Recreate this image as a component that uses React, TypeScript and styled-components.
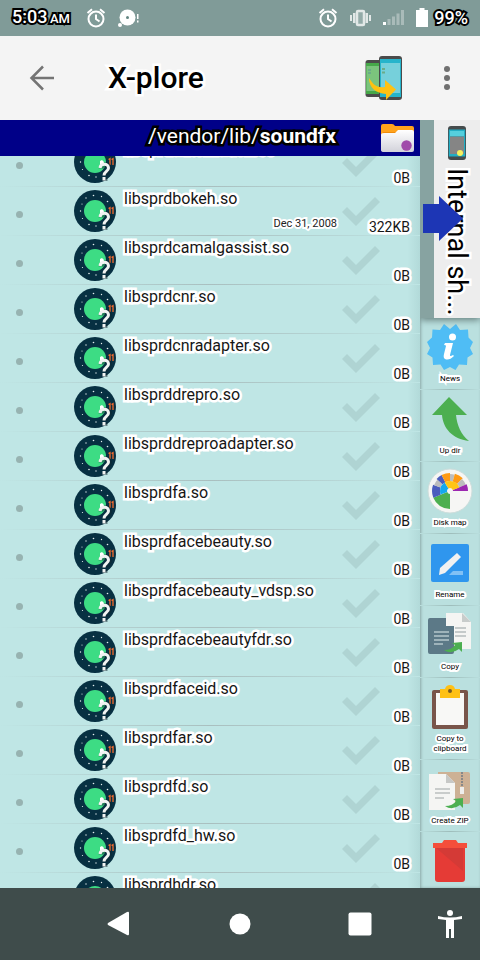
import React from "react";
import styled, { createGlobalStyle, css } from "styled-components";

const GlobalStyle = createGlobalStyle`
  * { box-sizing: border-box; }
  body { margin: 0; font-family: Roboto, "Liberation Sans", sans-serif; color: #000; }
  button { font: inherit; color: inherit; background: none; border: 0; padding: 0; margin: 0; cursor: pointer; }
  svg { display: block; flex: none; }
`;

const outline = (color: string, width: number) => css`
  -webkit-text-stroke: ${width}px ${color};
  paint-order: stroke fill;
  stroke-linejoin: round;
`;

const Screen = styled.div`
  display: flex;
  flex-direction: column;
  height: 100vh;
  overflow: hidden;
  background: #bfe6e5;
`;

const StatusBar = styled.div`
  display: flex;
  align-items: center;
  flex: none;
  height: 36px;
  padding: 0 12px;
  background: #809b98;
`;

const StatusText = styled.span`
  ${outline("#000", 4)}
  color: #fff;
  font-size: 18px;
  font-weight: 500;
  line-height: 36px;
  white-space: nowrap;
  small { margin-left: -2px; font-size: 13px; }
`;

const StatusIcons = styled.div<{ $end?: boolean }>`
  display: flex;
  align-items: center;
  gap: 12px;
  margin-left: ${(p) => (p.$end ? "auto" : "16px")};
  margin-right: ${(p) => (p.$end ? "6px" : "0")};
`;

const Toolbar = styled.header`
  display: flex;
  align-items: center;
  flex: none;
  height: 84px;
  padding: 0 18px 0 28px;
  background: #f4f4f4;
`;

const Title = styled.h1`
  ${outline("#fff", 5)}
  flex: 1;
  margin: 0 0 0 52px;
  font-size: 30px;
  font-weight: 500;
  line-height: 40px;
`;

const MenuButton = styled.button`
  margin-left: 29px;
`;

const Main = styled.main`
  display: flex;
  flex: 1;
  min-height: 0;
`;

const Pane = styled.section`
  display: flex;
  flex-direction: column;
  flex: 1;
  min-width: 0;
`;

const PathBar = styled.div`
  display: flex;
  align-items: center;
  flex: none;
  height: 36px;
  padding: 0 4px 0 8px;
  background: #000088;
`;

const Path = styled.h2`
  ${outline("#000", 5)}
  flex: 1;
  margin: 0;
  padding: 0 44px 4px 0;
  color: #fff;
  font-size: 21px;
  font-weight: 400;
  line-height: 28px;
  text-align: right;
`;

const FileList = styled.ul`
  display: flex;
  flex-direction: column;
  flex: 1;
  min-height: 0;
  margin: 0;
  padding: 0;
  overflow: hidden;
  list-style: none;
  background: linear-gradient(90deg, transparent 97%, #b2dad9) #bfe6e5;
`;

const FileRow = styled.li`
  display: flex;
  flex: none;
  height: 49px;
  padding: 0 10px 0 16px;
  border-bottom: 1px solid;
  border-image: linear-gradient(90deg, #bfe6e5, #a9bfbf 50%, #bfe6e5) 1;
  &:first-child { margin-top: -18px; }
`;

const Dot = styled.span`
  flex: none;
  width: 7px;
  height: 7px;
  margin: 24px 51px 0 0;
  border-radius: 50%;
  background: #97b3b1;
`;

const FileName = styled.span`
  ${outline("#fff", 5)}
  flex: 1;
  margin-left: 8px;
  color: #161616;
  font-size: 16px;
  line-height: 24px;
  white-space: nowrap;
`;

const FileDate = styled.span`
  ${outline("#fff", 4)}
  align-self: flex-end;
  margin: 0 4px 3px 0;
  color: #222;
  font-size: 11px;
  line-height: 16px;
`;

const Meta = styled.div`
  display: flex;
  flex-direction: column;
  flex: none;
  width: 69px;
  padding-top: 9px;
`;

const FileSize = styled.span`
  ${outline("#fff", 5)}
  margin-top: -8px;
  color: #161616;
  font-size: 14px;
  line-height: 16px;
  text-align: right;
`;

const Side = styled.aside`
  display: flex;
  flex-direction: column;
  flex: none;
  width: 60px;
  overflow: hidden;
  background: #bae0df;
  box-shadow: inset 1px 0 3px #8aa8a6;
`;

const StorageTab = styled.button`
  position: relative;
  display: flex;
  flex-direction: column;
  align-items: center;
  flex: none;
  height: 198px;
  padding-top: 6px;
  border-left: 14px solid #87a3a1;
  background: #ededed;
  box-shadow: 0 2px 7px #657d7b;
`;

const TabLabel = styled.span`
  ${outline("#fff", 5)}
  margin-top: 8px;
  font-size: 27px;
  line-height: 32px;
  writing-mode: vertical-rl;
  white-space: nowrap;
`;

const PaneArrow = styled.svg`
  position: absolute;
  left: -11px;
  top: 76px;
`;

const Action = styled.button`
  display: flex;
  flex-direction: column;
  align-items: center;
  flex: none;
  gap: 4px;
  min-height: 72px;
  padding: 6px 0 5px;
  border-bottom: 1px solid;
  border-image: linear-gradient(90deg, #bae0df, #9ebdbb 50%, #bae0df) 1;
`;

const ActionLabel = styled.span`
  ${outline("#fff", 4)}
  width: 52px;
  font-size: 8px;
  line-height: 10px;
  text-align: center;
`;

const NavBar = styled.nav`
  display: grid;
  grid-template-columns: 1fr 2fr 2fr 2fr 1fr;
  align-items: center;
  flex: none;
  height: 72px;
  background: #3f4c4b;
`;

const NavButton = styled.button<{ $column: number }>`
  grid-column: ${(p) => p.$column};
  display: flex;
  justify-content: center;
`;

const AlarmIcon = () => (
  <svg width="20" height="20" viewBox="0 0 20 20" fill="none" stroke="#fff" strokeWidth="2">
    <circle cx="10" cy="11" r="7.500" />
    <path d="M1.500 5 6 1.300M18.500 5 14 1.300M10 6.500V11l3.500 2.500" />
  </svg>
);

const ChatIcon = () => (
  <svg width="21" height="20" viewBox="0 0 21 20" fill="#fff">
    <circle cx="9.500" cy="9.500" r="8" />
    <circle cx="2" cy="17" r="2" />
    <circle cx="9.500" cy="9.500" r="1.500" fill="#638682" />
    <path d="M19 6h1.500v5H19zM19 12.500h1.500v2H19z" />
  </svg>
);

const VibrateIcon = () => (
  <svg width="21" height="18" viewBox="0 0 21 18" fill="#e2e8e7">
    <path d="M0 6h2v6H0zM3 4h2.500v10H3zM15.500 4H18v10h-2.500zM19 6h2v6h-2z" />
    <rect x="7" y="2" width="7" height="14" rx="1" fill="#93aba8" stroke="#e2e8e7" strokeWidth="2.500" />
  </svg>
);

const SignalIcon = () => (
  <svg width="21" height="16" viewBox="0 0 21 16" fill="#a9bbb9">
    <path d="M0 12h3v3H0z" fill="#fff" />
    <path d="M4.500 9h3v6h-3zM9 6.500h3V15H9zM13.500 3.500h3V15h-3zM18 0h3v15h-3z" />
  </svg>
);

const BatteryIcon = () => (
  <svg width="12" height="20" viewBox="0 0 12 20">
    <path d="M3.500 0h5v2H12v17H0V2h3.500z" fill="#fff" />
  </svg>
);

const BackIcon = () => (
  <svg width="28" height="28" viewBox="0 0 28 28" fill="none" stroke="#747474" strokeWidth="2.500">
    <path d="M26 14H4M15 2.500 3.500 14 15 25.500" />
  </svg>
);

const PhonesIcon = () => (
  <svg width="38" height="44" viewBox="0 0 38 44">
    <rect x=".5" y="4" width="18" height="37" rx="2.500" fill="#4b4b4b" />
    <path d="M1 7h15v31H1z" fill="#46a849" />
    <path d="M1.500 10H16v25H1.500z" fill="#7bc47d" />
    <rect x="14" y="0" width="23" height="44" rx="3" fill="#4b4b4b" />
    <path d="M15 3h21v38H15z" fill="#26b4cb" />
    <path d="M16 7h19v30H16z" fill="#76d0db" />
    <path d="M3 13h3v2H3zM3 16h3v2H3zM17 12h3v2h-3zM17 15.500h3v2h-3z" fill="#6bac89" />
    <path d="M4 22c5 8 9 10 16 9v-7l11 9.500L21 44v-6C11 37 4 32 4 22z" fill="#ffc112" />
  </svg>
);

const FolderIcon = () => (
  <svg width="36" height="30" viewBox="0 0 36 30">
    <defs>
      <linearGradient id="folder" x2="0" y2="1"><stop stopColor="#fff" /><stop offset="1" stopColor="#d2d2da" /></linearGradient>
    </defs>
    <path d="M1 22V3q0-2 2-2h9q2 0 3 2h17q2 0 2 2v18z" fill="#ffa21c" />
    <path d="M3 9h29v9H3z" fill="#ef8b0b" />
    <path d="M1 12q0-2 3-2h11l3-3h14q2 0 2 2v18q0 2-2 2H4q-3 0-3-2z" fill="url(#folder)" />
    <circle cx="26.500" cy="22.500" r="5.200" fill="#a04baa" />
  </svg>
);

const FileIcon = () => (
  <svg width="42" height="48" viewBox="0 0 42 48">
    <circle cx="21" cy="24" r="21" fill="#073042" />
    <g fill="#e4eeee">
      <circle cx="19.500" cy="8.500" r=".8" /><circle cx="27.500" cy="9.500" r=".7" /><circle cx="12" cy="11" r=".7" />
      <circle cx="33.500" cy="14.500" r=".8" /><circle cx="8" cy="17" r=".6" /><circle cx="6.500" cy="24" r=".7" />
      <circle cx="8.500" cy="31.500" r=".6" /><circle cx="15" cy="37.500" r=".8" /><circle cx="22" cy="39" r=".7" />
    </g>
    <circle cx="21" cy="24" r="11" fill="#3ddc84" />
    <path d="m34.500 21.500 1.500-.8v6.300M37.500 21.500l1.500-.8v6.300" fill="none" stroke="#f26b2f" strokeWidth="1.300" />
    <path d="M27 30.500c.5-5 8.500-5 8.500 0 0 3.500-4.500 3.500-4.500 7.500M31 39.500v3.500" fill="none" stroke="#10262e" strokeWidth="5" opacity=".5" />
    <path d="m26 23 2-1 2 2-1 3-3-1z" fill="#fff" />
    <path d="M26 30c.5-5 8.500-5 8.500 0 0 3.500-4.500 3.500-4.500 7.500M30 39v3.500" fill="none" stroke="#f1f3f2" strokeWidth="3" />
  </svg>
);

const CheckIcon = () => (
  <svg width="40" height="31" viewBox="0 0 40 31">
    <path d="m1 16 5-5 9 9L34 1l5 5-24 24z" fill="#afd4d3" />
  </svg>
);

const PhoneIcon = () => (
  <svg width="18" height="34" viewBox="0 0 18 34">
    <rect width="18" height="34" rx="3" fill="#454b4c" />
    <path d="M.8 3.500h16.400v27H.8z" fill="#22aec4" />
    <path d="M2 5h14v5H2z" fill="#55cfdd" />
    <path d="M2 10.500h14V28H2z" fill="#858585" />
    <circle cx="12" cy="27" r="3" fill="#f6f15c" />
  </svg>
);

const NewsIcon = () => (
  <svg width="46" height="46" viewBox="0 0 46 46">
    <path d="M23 5 29 0l4 6 8-.5.5 8L46 18l-3 6 3 6-5.500 3.500L40 41l-8-.5-3.500 5.500L23 43l-6 3-3.500-5.500L6 41l-.5-7.500L0 30l3-6-3-6 5-4.500.5-8L13 6l4-6z" fill="#4fbdf5" />
    <circle cx="25.500" cy="13" r="3.500" fill="#fff" />
    <path d="M18 19h8l-3 12q-.3 2 3 0l1 1q-5 5-9 3-2-1-1-5l2-8q0-1-2-1z" fill="#fff" />
  </svg>
);

const UpIcon = () => (
  <svg width="38" height="46" viewBox="0 0 38 46">
    <path d="M18 1 36 19H25c1 10 5 20 13 26C21 43 12 32 11 19H1z" fill="#4caf50" />
  </svg>
);

const diskSegments: { from: number; to: number; inner: number; outer: number; color: string }[] = [
  { from: 90, to: 158, inner: 3, outer: 18, color: "#4caf50" },
  { from: 158, to: 200, inner: 10, outer: 18, color: "#4b5cbd" },
  { from: 200, to: 222, inner: 10, outer: 17, color: "#bdbdbd" },
  { from: 222, to: 242, inner: 10, outer: 18, color: "#4b5cbd" },
  { from: 242, to: 270, inner: 10, outer: 18, color: "#ff9b14" },
  { from: 270, to: 286, inner: 10, outer: 17, color: "#bdbdbd" },
  { from: 286, to: 315, inner: 10, outer: 18, color: "#ff9b14" },
  { from: 315, to: 338, inner: 10, outer: 17, color: "#bdbdbd" },
  { from: 338, to: 360, inner: 3, outer: 18, color: "#9c27b0" },
  { from: 158, to: 238, inner: 3, outer: 10, color: "#14a8ee" },
  { from: 238, to: 338, inner: 3, outer: 10, color: "#ffc515" },
];

const DiskIcon = () => (
  <svg width="46" height="46" viewBox="0 0 46 46" fill="none">
    <circle cx="23" cy="23" r="22" fill="#f6f6f4" stroke="#cddddb" />
    {diskSegments.map((s) => (
      <circle
        key={`${s.from}-${s.inner}`}
        cx="23"
        cy="23"
        r={(s.inner + s.outer) / 2}
        stroke={s.color}
        strokeWidth={s.outer - s.inner}
        pathLength={360}
        strokeDasharray={`0 ${s.from} ${s.to - s.from} 360`}
      />
    ))}
  </svg>
);

const RenameIcon = () => (
  <svg width="38" height="46" viewBox="0 0 38 46">
    <rect y="4" width="38" height="38" rx="2" fill="#2f96ee" />
    <path d="m18 35 4-4h10v4z" fill="#82c1f5" />
    <path d="m8 35 1-7 17-15 4 4-16 16z" fill="#f1f1f1" />
  </svg>
);

const CopyIcon = () => (
  <svg width="46" height="46" viewBox="0 0 46 46">
    <path d="M19 1h17l8 9v27H19z" fill="#f5f5f3" />
    <path d="M35 1v9h9z" fill="#c8cccb" />
    <path d="M28 15h11v2H28zM28 19h11v2H28zM28 23h11v2H28z" fill="#c5caca" />
    <path d="M1 8q0-2 2-2h16v8h8v26q0 2-2 2H3q-2 0-2-2z" fill="#5c7987" />
    <path d="M7 19h15v2H7zM7 23h15v2H7zM7 27h15v2H7zM7 31h9v2H7z" fill="#9eb3ba" />
    <path d="M17 38q8 0 11-5l-3-2 10-1v10l-3-3q-8 6-15 1z" fill="#4caf50" />
  </svg>
);

const ClipIcon = () => (
  <svg width="38" height="46" viewBox="0 0 38 46">
    <rect x="1" y="6" width="36" height="39" rx="2" fill="#79554a" />
    <path d="M5 9h28v32H5z" fill="#f8f8f6" />
    <path d="M9 5h5q1-4 5-4t5 4h5v9H9z" fill="#ffc115" />
    <circle cx="19" cy="7" r="2" fill="#775a23" />
  </svg>
);

const ZipIcon = () => (
  <svg width="44" height="46" viewBox="0 0 44 46">
    <path d="M10 6h30q2 0 2 2v28q0 2-2 2H10z" fill="#cdb195" />
    <path d="M34 6v16" stroke="#888" strokeWidth="2" strokeDasharray="2 1" />
    <path d="M32 21h4v7h-4z" fill="#eeeeec" />
    <path d="M1 8h17l9 9v27H1z" fill="#f5f5f3" />
    <path d="M18 8v9h9z" fill="#c7c8c6" />
    <path d="M7 22h15v2H7zM7 26h15v2H7zM7 31h9v2H7z" fill="#c9cccb" />
    <path d="M17 40q8 0 11-5l-3-2 10-1v10l-3-3q-8 6-15 1z" fill="#4caf50" />
  </svg>
);

const DeleteIcon = () => (
  <svg width="36" height="46" viewBox="0 0 36 46">
    <path d="M3 9h30v32q0 3-3 3H6q-3 0-3-3z" fill="#e53b36" />
    <path d="m3 9 28 24V9z" fill="#d43a36" />
    <path d="M1 5h9l2-3h12l2 3h9v5H1z" fill="#f44e3b" />
  </svg>
);

const files: { name: string; size: string; date?: string }[] = [
  { name: "libsprdautomation.so", size: "0B" },
  { name: "libsprdbokeh.so", size: "322KB", date: "Dec 31, 2008" },
  { name: "libsprdcamalgassist.so", size: "0B" },
  { name: "libsprdcnr.so", size: "0B" },
  { name: "libsprdcnradapter.so", size: "0B" },
  { name: "libsprddrepro.so", size: "0B" },
  { name: "libsprddreproadapter.so", size: "0B" },
  { name: "libsprdfa.so", size: "0B" },
  { name: "libsprdfacebeauty.so", size: "0B" },
  { name: "libsprdfacebeauty_vdsp.so", size: "0B" },
  { name: "libsprdfacebeautyfdr.so", size: "0B" },
  { name: "libsprdfaceid.so", size: "0B" },
  { name: "libsprdfar.so", size: "0B" },
  { name: "libsprdfd.so", size: "0B" },
  { name: "libsprdfd_hw.so", size: "0B" },
  { name: "libsprdhdr.so", size: "0B" },
];

const actions = [
  { label: "News", Icon: NewsIcon },
  { label: "Up dir", Icon: UpIcon },
  { label: "Disk map", Icon: DiskIcon },
  { label: "Rename", Icon: RenameIcon },
  { label: "Copy", Icon: CopyIcon },
  { label: "Copy to clipboard", Icon: ClipIcon },
  { label: "Create ZIP", Icon: ZipIcon },
  { label: "Delete", Icon: DeleteIcon },
];

export default function App() {
  return (
    <Screen>
      <GlobalStyle />
      <StatusBar>
        <StatusText>5:03 <small>AM</small></StatusText>
        <StatusIcons><AlarmIcon /><ChatIcon /></StatusIcons>
        <StatusIcons $end><AlarmIcon /><VibrateIcon /><SignalIcon /><BatteryIcon /></StatusIcons>
        <StatusText>99%</StatusText>
      </StatusBar>
      <Toolbar>
        <button aria-label="Back"><BackIcon /></button>
        <Title>X-plore</Title>
        <button aria-label="Switch pane"><PhonesIcon /></button>
        <MenuButton aria-label="More options">
          <svg width="30" height="28" viewBox="0 0 30 28" fill="#707070">
            <circle cx="15" cy="5" r="3" /><circle cx="15" cy="14" r="3" /><circle cx="15" cy="23" r="3" />
          </svg>
        </MenuButton>
      </Toolbar>
      <Main>
        <Pane>
          <PathBar>
            <Path>/vendor/lib/<b>soundfx</b></Path>
            <FolderIcon />
          </PathBar>
          <FileList>
            {files.map((file) => (
              <FileRow key={file.name}>
                <Dot />
                <FileIcon />
                <FileName>{file.name}</FileName>
                {file.date && <FileDate>{file.date}</FileDate>}
                <Meta>
                  <CheckIcon />
                  <FileSize>{file.size}</FileSize>
                </Meta>
              </FileRow>
            ))}
          </FileList>
        </Pane>
        <Side>
          <StorageTab>
            <PhoneIcon />
            <TabLabel>Internal sh...</TabLabel>
            <PaneArrow width="40" height="45" viewBox="0 0 40 45">
              <path d="M0 8h16V0l24 22.500L16 45v-8H0z" fill="#1d36b5" />
            </PaneArrow>
          </StorageTab>
          {actions.map(({ label, Icon }) => (
            <Action key={label}>
              <Icon />
              <ActionLabel>{label}</ActionLabel>
            </Action>
          ))}
        </Side>
      </Main>
      <NavBar>
        <NavButton $column={2} aria-label="Back">
          <svg width="26" height="26" viewBox="0 0 26 26"><path d="M1 12 20 1q2-1 2 1v21q0 2-2 1L1 14q-1-1 0-2z" fill="#fff" /></svg>
        </NavButton>
        <NavButton $column={3} aria-label="Home">
          <svg width="22" height="26" viewBox="0 0 22 26"><circle cx="11" cy="13" r="10.500" fill="#fff" /></svg>
        </NavButton>
        <NavButton $column={4} aria-label="Recent apps">
          <svg width="24" height="24" viewBox="0 0 24 24"><rect x=".5" y=".5" width="23" height="23" rx="2" fill="#fff" /></svg>
        </NavButton>
        <NavButton $column={5} aria-label="Accessibility">
          <svg width="26" height="28" viewBox="0 0 26 28" fill="#fff">
            <circle cx="13" cy="3" r="3" /><path d="M1 6q12 3 24 0v3l-8 1v18h-3v-9h-2v9H9V10L1 9z" />
          </svg>
        </NavButton>
      </NavBar>
    </Screen>
  );
}
